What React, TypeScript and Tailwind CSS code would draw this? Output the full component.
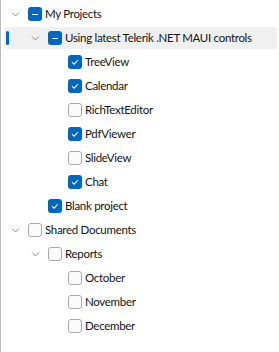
import React from 'react';

type CheckState = 'checked' | 'unchecked' | 'partial';

type Node = {
  label: string;
  level: number;
  state: CheckState;
  expandable?: boolean;
  selected?: boolean;
};

const nodes: Node[] = [
  { label: 'My Projects', level: 0, state: 'partial', expandable: true },
  { label: 'Using latest Telerik .NET MAUI controls', level: 1, state: 'partial', expandable: true, selected: true },
  { label: 'TreeView', level: 2, state: 'checked' },
  { label: 'Calendar', level: 2, state: 'checked' },
  { label: 'RichTextEditor', level: 2, state: 'unchecked' },
  { label: 'PdfViewer', level: 2, state: 'checked' },
  { label: 'SlideView', level: 2, state: 'unchecked' },
  { label: 'Chat', level: 2, state: 'checked' },
  { label: 'Blank project', level: 1, state: 'checked' },
  { label: 'Shared Documents', level: 0, state: 'unchecked', expandable: true },
  { label: 'Reports', level: 1, state: 'unchecked', expandable: true },
  { label: 'October', level: 2, state: 'unchecked' },
  { label: 'November', level: 2, state: 'unchecked' },
  { label: 'December', level: 2, state: 'unchecked' },
];

const indent = ['pl-[7px]', 'pl-[27px]', 'pl-[47px]'];

const Chevron = () => (
  <svg width="10" height="10" viewBox="0 0 10 10" className="shrink-0">
    <path d="M1 3.5 L4.5 7 L8 3.5" fill="none" stroke="#8a8a8a" strokeWidth="1" />
  </svg>
);

const CheckBox = ({ state }: { state: CheckState }) => {
  if (state === 'unchecked') {
    return <div className="w-[14px] h-[14px] rounded-[3px] border border-[#a9a9a9] bg-[#fbfbfb] shrink-0" />;
  }
  return (
    <div className="w-[14px] h-[14px] rounded-[3px] bg-[#0067c0] shrink-0 flex items-center justify-center">
      {state === 'checked' ? (
        <svg width="10" height="10" viewBox="0 0 10 10">
          <path d="M2 5.2 L4.1 7.2 L8 3" fill="none" stroke="#fff" strokeWidth="1.1" />
        </svg>
      ) : (
        <div className="w-[6px] h-[1px] bg-white" />
      )}
    </div>
  );
};

export default function App() {
  return (
    <div
      className="w-[279px] h-[352px] bg-white border-l border-[#bcbcbc] pt-[2px] text-[#141414]"
      style={{ fontFamily: 'Lato, "Noto Sans", sans-serif' }}
    >
      {nodes.map((n) => (
        <div key={n.label} className="h-[24px] py-[1px] pl-[3px] pr-[2px]">
          <div
            className={`relative h-[22px] flex items-center rounded-[3px] ${indent[n.level]} ${
              n.selected ? 'bg-[#f0f0f0]' : ''
            }`}
          >
            {n.selected && (
              <div className="absolute left-[2px] top-[4px] w-[3px] h-[14px] rounded-full bg-[#0067c0]" />
            )}
            <div className="w-[17px] shrink-0 flex items-center">
              {n.expandable && <Chevron />}
            </div>
            <CheckBox state={n.state} />
            <span className="ml-[3px] text-[11.5px] tracking-[-0.3px] leading-none whitespace-nowrap">
              {n.label}
            </span>
          </div>
        </div>
      ))}
    </div>
  );
}
